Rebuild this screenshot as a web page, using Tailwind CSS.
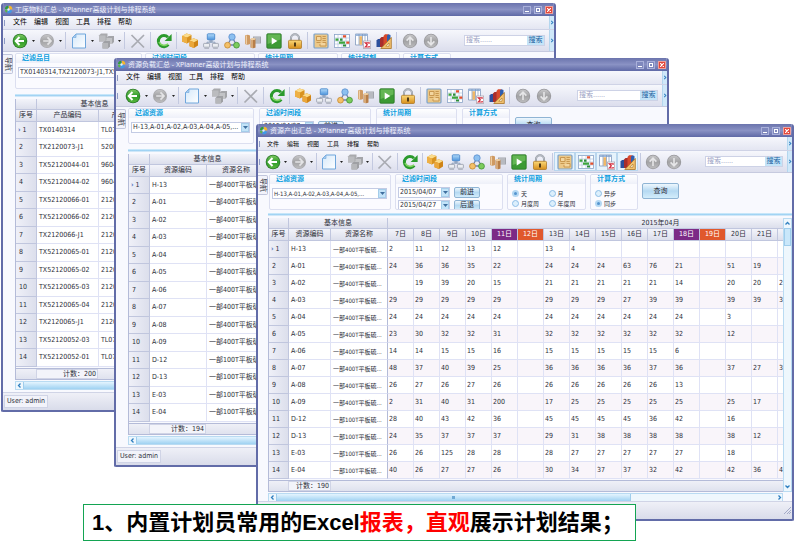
<!doctype html>
<html lang="zh-CN">

<head>
  <meta charset="utf-8">
  <meta name="viewport" content="width=device-width,initial-scale=1">
  <title>XPlanner高级计划与排程系统</title>
  <script src="https://cdn.jsdelivr.net/npm/@tailwindcss/browser@4"></script>
</head>

<body class="bg-white font-['DejaVu_Sans_Condensed','Noto_Sans_CJK_SC',sans-serif] text-[7px] leading-[9px] text-[#2c2e38]">
  <!-- icons -->
  <svg class="absolute w-0 h-0" aria-hidden="true">
    <defs>
      <linearGradient id="gGreen" x1="0" y1="0" x2="0" y2="1"><stop offset="0" stop-color="#7cc860"/><stop offset=".5" stop-color="#2f9a2a"/><stop offset="1" stop-color="#58b83a"/></linearGradient>
      <linearGradient id="gGray" x1="0" y1="0" x2="0" y2="1"><stop offset="0" stop-color="#c6c6c8"/><stop offset=".5" stop-color="#a2a2a4"/><stop offset="1" stop-color="#bcbcbe"/></linearGradient>
      <linearGradient id="gGold" x1="0" y1="0" x2="0" y2="1"><stop offset="0" stop-color="#fbd878"/><stop offset="1" stop-color="#d78f1c"/></linearGradient>
      <linearGradient id="gBlue" x1="0" y1="0" x2="0" y2="1"><stop offset="0" stop-color="#b4dcfa"/><stop offset="1" stop-color="#4c94dc"/></linearGradient>
      <linearGradient id="gPage" x1="0" y1="0" x2="1" y2="1"><stop offset="0" stop-color="#d4e8fa"/><stop offset="1" stop-color="#ffffff"/></linearGradient>
    </defs>
    <symbol id="logo" viewBox="0 0 10 10">
      <path d="M1 4.5A4 4 0 0 1 4.6.8L5 4.6z" fill="#2f9e3a"/><path d="M5.4.7A4 4 0 0 1 9.2 5L5.6 4.8z" fill="#f4b62c"/><path d="M9 6A4 4 0 0 1 3.6 9L5.2 5.6z" fill="#3d9be8"/><path d="M2.8 8.5A4 4 0 0 1 .9 5.3l3.3.1z" fill="#56b848"/><circle cx="5" cy="5" r="1.3" fill="#dff0ff"/>
    </symbol>
    <symbol id="back" viewBox="0 0 16 16">
      <circle cx="8" cy="8" r="7.3" fill="#2c7a2a"/><circle cx="8" cy="8" r="6.5" fill="url(#gGreen)"/><path d="M7.5 4L3.7 8l3.8 4M4.2 8H12" fill="none" stroke="#fff" stroke-width="2"/>
    </symbol>
    <symbol id="fwd" viewBox="0 0 16 16">
      <circle cx="8" cy="8" r="7" fill="#a8a8ac"/><circle cx="8" cy="8" r="6.3" fill="url(#gGray)"/><path d="M8.5 4.3L12 8l-3.5 3.7M11.5 8H4.2" fill="none" stroke="#e4e4e6" stroke-width="1.7"/>
    </symbol>
    <symbol id="up" viewBox="0 0 16 16">
      <circle cx="8" cy="8" r="7.2" fill="#98989c"/><circle cx="8" cy="8" r="6.4" fill="url(#gGray)"/><path d="M4.6 7.6L8 4.2l3.4 3.4M8 4.8V12" fill="none" stroke="#e6e6e8" stroke-width="1.6"/>
    </symbol>
    <symbol id="down" viewBox="0 0 16 16">
      <circle cx="8" cy="8" r="7.2" fill="#98989c"/><circle cx="8" cy="8" r="6.4" fill="url(#gGray)"/><path d="M4.6 8.4L8 11.8l3.4-3.4M8 11.2V4" fill="none" stroke="#e6e6e8" stroke-width="1.6"/>
    </symbol>
    <symbol id="doc" viewBox="0 0 16 16">
      <path d="M5 1h9.5v14H1.5V4.5z" fill="url(#gPage)" stroke="#6fa6dc"/><path d="M5 1v3.5H1.5z" fill="#a8ccee" stroke="#6fa6dc" stroke-width=".6"/>
    </symbol>
    <symbol id="cubes" viewBox="0 0 16 16">
      <path d="M1 2.500L3 .5h6.500v6L7.500 8.500H1z" fill="#a9aaad"/><path d="M1 2.500h6.500v6H1z" fill="#bbbcbf"/><path d="M8.500 5l2-2H16v6l-2 2H8.500z" fill="#a4a5a9"/><path d="M8.500 5H14v6H8.500z" fill="#c2c3c6"/><path d="M4.500 10l2-2H12v5.500l-2 2H4.500z" fill="#9fa0a4"/><path d="M4.500 10H10v5.500H4.500z" fill="#b6b7ba"/>
    </symbol>
    <symbol id="cross" viewBox="0 0 16 16">
      <path d="M1.5 2L14 14.5M14 2L1.5 14.5" stroke="#a9abb2" stroke-width="1.7" fill="none"/>
    </symbol>
    <symbol id="refresh" viewBox="0 0 16 16">
      <path d="M12.3 11.6A5.6 5.6 0 1 1 12 4.2" fill="none" stroke="#2b9a2c" stroke-width="3"/><path d="M12 10.8A5.6 5.6 0 0 1 3 9" fill="none" stroke="#7fd460" stroke-width="1.6"/><path d="M15.6 1v7H8.6z" fill="#2b9a2c"/>
    </symbol>
    <symbol id="boxes" viewBox="0 0 16 16">
      <path d="M0 3l4.5-2.4L9.5 2v6L5 10.5 0 8.5z" fill="#d8921f"/><path d="M0 3l4.5-2.4L9.5 2 5 4.6z" fill="#fbdc8c"/><path d="M0 3l5 1.6v5.9L0 8.5z" fill="#eeb044"/>
      <path d="M7.5 7.5l4-2.2L16 7v5.6L12 15l-4.5-1.8z" fill="#cf8416"/><path d="M7.5 7.5l4-2.2L16 7l-4 2.2z" fill="#fbdc8c"/><path d="M7.5 7.5L12 9.2V15l-4.5-1.8z" fill="#eba73a"/>
    </symbol>
    <symbol id="net" viewBox="0 0 16 16">
      <path d="M8 7v3M4 11V9.2h8V11" stroke="#8ea2be" fill="none"/><rect x="4.3" y=".8" width="7.4" height="6" rx=".8" fill="url(#gBlue)" stroke="#3f82c8" stroke-width=".8"/><path d="M6 8h4" stroke="#7f93b0"/>
      <rect x=".6" y="10.4" width="6" height="3.8" rx=".6" fill="#eceef2" stroke="#989eac" stroke-width=".8"/><rect x="9.4" y="10.4" width="6" height="3.8" rx=".6" fill="#eceef2" stroke="#989eac" stroke-width=".8"/><path d="M1.4 15.3h4.6M10.2 15.3h4.6" stroke="#a9aeba"/>
    </symbol>
    <symbol id="tri" viewBox="0 0 16 16">
      <path d="M8 4L3.4 12h9.2z" fill="none" stroke="#6f80a8" stroke-width="1.3"/><circle cx="8" cy="4" r="3.2" fill="#8cc0f0" stroke="#5c8fce" stroke-width=".8"/><circle cx="3.5" cy="12.2" r="2.900" fill="#f4c068" stroke="#c48a34" stroke-width=".8"/><circle cx="12.5" cy="12.2" r="2.900" fill="#7ccc5c" stroke="#44923a" stroke-width=".8"/>
    </symbol>
    <symbol id="mach" viewBox="0 0 16 16">
      <rect x="8" y="3.5" width="8" height="7" fill="#a2a5ac"/><path d="M9 5h6M9 7h6M9 9h6" stroke="#d8dade" stroke-width=".8"/><path d="M0 2.5Q2.5.8 5 2.5V11Q2.5 12.6 0 11z" fill="#cf9a62"/><path d="M1.3 2.6v8.6" stroke="#f2d4ac" stroke-width="1.2"/><path d="M5.5 6Q8 4.4 10.500 6v8.500Q8 16 5.500 14.500z" fill="#b87e48"/><path d="M7 6v9" stroke="#ecc798" stroke-width="1.2"/><ellipse cx="8" cy="6" rx="2.500" ry=".9" fill="#f0d2a6"/>
    </symbol>
    <symbol id="play" viewBox="0 0 16 16">
      <rect x=".8" y=".8" width="14.400" height="14.400" rx="1" fill="#3c9a34" stroke="#2b7326" stroke-width=".8"/><path d="M1.600 1.600h12.800v5L1.600 11z" fill="#64b654"/><path d="M5.700 4.500l5.600 3.500-5.600 3.500z" fill="#fff"/>
    </symbol>
    <symbol id="lock" viewBox="0 0 16 16">
      <path d="M4 8V5.200a4 4 0 0 1 8 0V8" fill="none" stroke="#8f959f" stroke-width="2"/><path d="M4 8V5.200a4 4 0 0 1 8 0V8" fill="none" stroke="#d0d4da" stroke-width=".7"/><rect x="1.500" y="7.300" width="13" height="8.200" rx="1" fill="url(#gGold)" stroke="#a8701a" stroke-width=".7"/><path d="M8 9.500v4" stroke="#3e2c10" stroke-width="1.800"/>
    </symbol>
    <symbol id="layout" viewBox="0 0 16 16">
      <rect x="1" y="1" width="14" height="14" rx="1" fill="#ecc888" stroke="#7ba2cc" stroke-width="1.200"/><path d="M3.500 3.500h4.500v4H3.500zM9.500 3.500h3.300M9.500 5.500h3.300M9.500 7.500h3.300M3.500 9.500h4M9.500 9.500h3.500v3.500h-6v-2" fill="#f3d6a0" stroke="#c4924a" stroke-width=".9"/>
    </symbol>
    <symbol id="gantt" viewBox="0 0 16 16">
      <rect x=".5" y="1.500" width="15" height="13" fill="#fff" stroke="#8aa4c8" stroke-width=".8"/><path d="M.5 5h15M.5 8h15M.5 11h15M4 1.500v13M8 1.500v13M12 1.500v13" stroke="#a9bcd8" stroke-width=".6"/><path d="M9 2.300h3v2.200H9zM12.300 8.500h3v2.200h-3z" fill="#e4502c"/><path d="M1.500 5.600h3v2.200h-3zM5 8.500h6v2.200H5z" fill="#3da63c"/><path d="M6 5.600h2.500v2.200H6zM9 11.600h3v2H9z" fill="#2c8c3a"/>
    </symbol>
    <symbol id="sum" viewBox="0 0 16 16">
      <path d="M.5 1h12v11H.5z" fill="#fff" stroke="#8098bc" stroke-width=".8"/><path d="M.5 1h12v2H.5z" fill="#9db8dc"/><path d="M4.300 3.200h3v8.600h-3z" fill="#f0b868"/><path d="M4 1v11M7.500 1v11M10 1v11" stroke="#8098bc" stroke-width=".7"/><rect x="8.500" y="8" width="7.200" height="7.600" fill="#fff" stroke="#a49ca8" stroke-width=".7"/><path d="M14.200 10.800V9.800H10.300l2 2-2 2.200h3.900v-1" fill="none" stroke="#d42c3c" stroke-width="1.200"/>
    </symbol>
    <symbol id="chart" viewBox="0 0 16 16">
      <path d="M.5 7.500L2 6h3v8H.5z" fill="#2c4f9c"/><path d="M4 5.500L5.500 4H8v10H4z" fill="#a82e2c"/><path d="M7.500 3L9 1.200h3.500V12h-5z" fill="#d84a2c"/><path d="M11 2.500l1.500-1.300 2 .8v10H11z" fill="#2f5fb0"/><path d="M15.300 4.500V15.500H4.800z" fill="#f2c270" stroke="#a87224" stroke-width=".8"/><path d="M13 10v3.300H9.800z" fill="#fdf4e0" stroke="#a87224" stroke-width=".6"/>
    </symbol>
  </svg>

  <main id="desktop" class="relative min-h-[545px] overflow-hidden">
    <p class="absolute z-40 left-[83px] top-[504px] w-[553px] h-[37px] flex items-center border border-[#13a452] bg-white pl-2 whitespace-nowrap text-[22px] leading-[34px] font-bold text-black font-['Liberation_Sans','Noto_Sans_CJK_SC',sans-serif]">1、内置计划员常用的Excel<span class="text-[#ff0000]">报表，直观</span>展示计划结果；</p>
  </main>

  <script>
    const desktop = document.getElementById("desktop");

    const icon = (name, cls) => `<svg class="${cls || "w-4 h-4"}" aria-hidden="true"><use href="#${name}"/></svg>`;
    const arrow = `<svg class="w-[5px] h-[3px]" viewBox="0 0 5 3" aria-hidden="true"><path d="M0 0h5L2.500 3z" fill="#3f6f9f"/></svg>`;

    const menus = ["文件", "编辑", "视图", "工具", "排程", "帮助"];
    // "|" is a separator, "v" a drop-down arrow
    const tools = [["back", "后退"], "v", ["fwd", "前进"], "v", "|", ["doc", "新建"], "v", ["cubes", "复制"], "v", "|", ["cross", "删除"], "|", ["refresh", "刷新"], "|",
      ["boxes", "物料"], ["net", "网络"], ["tri", "工艺"], ["mach", "资源"], ["play", "运行"], ["lock", "锁定"], "|",
      ["layout", "布局"], ["gantt", "甘特图"], ["sum", "汇总"], ["chart", "图表"], "|", ["up", "上移"], ["down", "下移"]];
    const pressed = ["layout", "gantt", "sum", "chart"];

    function toolbar(win) {
      return tools.map(t => {
        if (t == "|") return `<span class="${win.front ? "w-1" : "w-[5px]"} flex justify-center"><i class="w-px h-[17px] bg-[#c3c9e0]"></i></span>`;
        if (t == "v") return `<span class="${win.front ? "w-[5px]" : "w-[6px]"} flex justify-center"><svg class="w-[3px] h-[2px]" viewBox="0 0 3 2"><path d="M0 0h3L1.500 2z" fill="#222"/></svg></span>`;
        const on = win.front && pressed.includes(t[0]);
        return `<button type="button" aria-label="${t[1]}" class="w-[21px] h-[19px] shrink-0 flex items-center justify-center border ${on ? "border-[#b9d6ee] bg-[#e6f3fc]" : "border-transparent"}">${icon(t[0])}</button>`;
      }).join("");
    }

    function combo(text, cls, label) {
      return `<div class="relative ${cls}"><select aria-label="${label}" class="appearance-none block w-full h-[11px] border border-[#c3cbe4] bg-white pl-px pr-[8px] leading-[9px] whitespace-nowrap overflow-hidden"><option>${text}</option></select>
        <span class="absolute right-px top-px w-[8px] h-[9px] flex items-center justify-center bg-[#c3e3f8] border border-[#a5cdea] pointer-events-none">${arrow}</span></div>`;
    }

    const blueButton = "border border-[#8fb4d4] rounded-[2px] bg-linear-to-b from-[#eef7fd] via-[#b5d9f2] to-[#d3edfb] flex items-center justify-center";

    function dates() {
      return `<div class="px-[2px] pt-[3px] flex flex-col gap-[2px]">` + [["2015/04/07", "前进", "开始日期"], ["2015/04/27", "后退", "结束日期"]].map(d =>
        `<div class="flex gap-1">${combo(d[0], "w-[52px]", d[2])}<button type="button" class="w-[26px] h-[11px] ${blueButton}">${d[1]}</button></div>`).join("") + `</div>`;
    }

    function radios(name, items, cls) {
      return `<div class="grid ${cls} pl-1 pt-[5px] gap-y-px">` + items.map(t =>
        `<label class="flex items-center gap-[2px] h-[9px] text-[6px] whitespace-nowrap"><input type="radio" name="${name}" ${t[1] ? "checked" : ""} class="appearance-none w-[7px] h-[7px] rounded-full border border-[#8dbde6] bg-[#dceffc] checked:bg-[#5595cf] checked:border-2 checked:border-[#b4d8f3]">${t[0]}</label>`).join("") + `</div>`;
    }

    function panel(title, width, body) {
      return `<fieldset class="${width} h-[36px] shrink-0 overflow-hidden border border-[#dcdff0] rounded-[2px] bg-[#fbfbff]">
        <div class="h-[9px] pl-[6px] bg-linear-to-b from-white to-[#eef0f9] font-bold text-[#0d9fe0] leading-[9px] whitespace-nowrap">${title}</div>${body}</fieldset>`;
    }

    function grid(win) {
      const head = "border-r border-b border-[#c0c6de] bg-linear-to-b from-[#f3f4fa] to-[#dcdfec] font-normal text-center p-0 whitespace-nowrap overflow-hidden";
      const cell = "border-r border-b border-[#dfe2f5] p-0 bg-white whitespace-nowrap overflow-hidden";
      const days = win.days || [];
      let html = `<table class="table-fixed border-separate border-spacing-0 ${win.tableWidth}"><colgroup>${win.cols.map(c => `<col class="${c}">`).join("")}${days.map((d, i) => `<col class="${i < 15 ? "w-[26px]" : "w-[156px]"}">`).join("")}</colgroup>`;
      html += `<thead><tr class="h-[11px]"><th class="${head}"></th><th colspan="2" class="${head}">基本信息</th>${days.length ? `<th colspan="16" class="${head}">2015年04月</th>` : ""}</tr>`;
      html += `<tr class="h-[12px]"><th class="${head}">序号</th>${win.heads.map(h => `<th class="${head}">${h}</th>`).join("")}`;
      html += days.map(d => {
        if (d == 11 || d == 18) return `<th class="border-r border-b border-[#c0c6de] bg-[#7c2a86] text-white font-normal p-0">${d}日</th>`;
        if (d == 12 || d == 19) return `<th class="border-r border-b border-[#c0c6de] bg-[#e0582c] text-white font-normal p-0">${d}日</th>`;
        return `<th class="${head}">${d == 22 ? "" : d + "日"}</th>`;
      }).join("") + `</tr></thead><tbody>`;
      win.rows.forEach((row, i) => {
        const h = win.front ? "h-[17px]" : "h-[17px] even:h-[18px]";
        html += `<tr class="group ${h}"><th class="border-r border-b border-[#c0c6de] bg-linear-to-r from-[#eff0f8] to-[#dcdfec] font-normal text-left p-0 ${i ? "pl-[3px]" : "pl-[2px]"}">${i ? "" : `<span class="font-bold text-[#4a6cb8]">›</span> `}${i + 1}</th>`;
        html += `<td class="${cell} pl-[2px]">${row[0]}</td><td class="${cell} pl-[2px] ${win.front ? "text-[6px] border-r-[#b4bbd8]" : ""}">${row[1]}</td>`;
        if (days.length) {
          const vals = row[2].split(",");
          html += days.map((d, j) => `<td class="${cell} pl-px group-even:bg-[#f9f5fa]">${vals[j] || ""}</td>`).join("");
        }
        html += `</tr>`;
      });
      return html + `</tbody></table>`;
    }

    const chev = d => `<svg class="w-[5px] h-[5px]" viewBox="0 0 5 5"><path d="${d}" fill="none" stroke="#2f7fc0" stroke-width="1.300"/></svg>`;

    function render(win) {
      const side = `<span class="ml-1 w-[5px] self-stretch flex items-center justify-center bg-[#cfe8f9] border-l border-[#b4d6ee]">${chev("M1.500 .5l2 2-2 2")}</span>`;
      const grip = `<i class="w-[2px] h-[6px] ml-px border-l border-[#8d9ac4] shrink-0"></i>`;
      const sec = document.createElement("section");
      sec.className = win.frame + " absolute flex flex-col overflow-hidden rounded-t-[3px] rounded-b-[2px] border-2 border-t-0 border-[#626ca8] bg-[#f8f9fe]";
      sec.innerHTML = `
        <header class="h-[13px] shrink-0 flex items-center gap-[2px] px-px bg-linear-to-b from-[#6b74ad] via-[#8a92c4] to-[#5f69a6] text-[#eef0fc]">
          ${icon("logo", "w-[9px] h-[9px]")}
          <h2 class="flex-1 leading-[13px] whitespace-nowrap font-['Noto_Sans','Noto_Sans_CJK_SC',sans-serif]">${win.title}</h2>
          <button type="button" aria-label="最小化" class="w-2 h-2 border border-[#a9b0da] bg-[#7f88bd] flex items-end justify-center"><i class="w-[4px] h-px mb-px bg-white"></i></button>
          <button type="button" aria-label="最大化" class="w-2 h-2 ml-px border border-[#a9b0da] bg-[#7f88bd] flex items-center justify-center"><i class="w-[4px] h-[4px] border border-white"></i></button>
          <button type="button" aria-label="关闭" class="w-2 h-2 ml-px border border-[#f0a09a] bg-[#e2483c] flex items-center justify-center"><svg class="w-[4px] h-[4px]" viewBox="0 0 4 4"><path d="M0 0l4 4M4 0L0 4" stroke="#fff" stroke-width="1.200"/></svg></button>
        </header>
        <nav class="h-[14px] shrink-0 flex items-center bg-linear-to-b from-[#f6f7fc] to-[#e4e6f2] border-b border-[#cfd3e6]">
          ${grip}<div class="flex-1 flex ${win.front ? "gap-2 text-[6px] pl-[6px]" : "gap-[7px] pl-[7px]"}">${menus.map(m => `<a href="#" class="whitespace-nowrap text-black">${m}</a>`).join("")}</div>${side}
        </nav>
        <div class="h-[22px] shrink-0 flex items-center bg-linear-to-b from-[#f6f7fc] to-[#dcdeed] border-b border-[#c6cadf]">
          ${grip}<div class="flex items-center ${win.front ? "pl-px" : "pl-[3px]"}">${toolbar(win)}</div>
          <form class="ml-auto ${win.front ? "w-[78px]" : "w-[81px]"} h-[11px] flex border border-[#cdd2e6] bg-white">
            <input type="text" aria-label="搜索" placeholder="搜索......" class="flex-1 min-w-0 pl-px text-[7px] leading-[9px] placeholder:text-[#9ba2c4]">
            <button type="button" class="w-[17px] bg-[#c4e4f8] text-[#1c5fa0] leading-[9px]">搜索</button>
          </form>${side}
        </div>
        <div class="flex-1 flex min-h-0">
          <aside class="${win.front ? "w-[10px]" : "w-[12px]"} shrink-0">
            <button type="button" class="mt-[2px] w-[10px] h-[20px] flex items-center justify-center border border-l-0 border-[#c0c5dc] rounded-r-[2px] bg-[#f2f3fa] [writing-mode:vertical-rl] [text-orientation:sideways] leading-[8px]">导航</button>
          </aside>
          <div class="flex-1 min-w-0 flex flex-col">
            <div class="pt-px flex ${win.gap}">${win.panels.join("")}</div>
            <div class="h-[3px] shrink-0 bg-linear-to-b from-[#d8effc] to-[#8fcaf0] border-b border-[#cfe7f8]"></div>
            <div class="mt-[2px] ${win.gridHeight} shrink-0 flex">
              <div class="flex-1 min-w-0 flex flex-col border-l border-[#b4bbd8]">
                <div class="flex-1 min-h-0 overflow-hidden">${grid(win)}</div>
                <div class="h-[12px] shrink-0 flex items-center border-y border-[#b4bbd8] bg-linear-to-b from-[#eff0f7] to-[#dfe2ee]">
                  <output class="${win.count[1]} h-[10px] border border-[#d0d4e6] bg-[#f3f4fa] text-right pr-px leading-[9px] whitespace-nowrap">计数：${win.count[0]}</output>
                </div>
              </div>
              <div class="w-[9px] shrink-0 flex flex-col items-center border border-[#b9dbf2] bg-[#eef7fd] py-[2px]">
                ${chev("M.5 3.500l2-2 2 2")}<i class="mt-[2px] w-full h-[18px] border border-[#9fcdec] bg-[#c9e7fa]"></i><span class="mt-auto">${chev("M.5 1.500l2 2 2-2")}</span>
              </div>
            </div>
            <div class="h-[9px] mt-px mr-[9px] shrink-0 flex items-center border border-[#b9dbf2] bg-[#eef7fd]">
              <span class="w-[7px] flex justify-center">${chev("M3.500 .5l-2 2 2 2")}</span>
              <i class="w-[355px] h-full flex items-center justify-center bg-linear-to-b from-[#e4f4fe] to-[#9fd2f2] border-x border-[#9fcdec]"><i class="w-[3px] h-[3px] bg-[#6fa9d4]"></i></i>
              <span class="ml-auto">${chev("M1.500 .5l2 2-2 2")}</span>
            </div>
          </div>
        </div>
        <footer class="h-[18px] shrink-0 flex items-center border-t border-[#d0d4e6] bg-linear-to-b from-[#eff0f7] to-[#d9dcea]">
          <span class="ml-px w-[44px] h-[13px] border border-[#d0d4e6] bg-[#f2f3fa] pl-[2px] leading-[11px] whitespace-nowrap">${win.front ? "" : "User: admin"}</span>
          <svg class="ml-auto mr-px w-[7px] h-[7px]" viewBox="0 0 7 7"><path d="M0 7L7 0M3 7l4-4M5 7l2-2" stroke="#a4abc8"/></svg>
        </footer>`;
      desktop.appendChild(sec);
    }

    const codes = ["H-13", "A-01", "A-02", "A-03", "A-04", "A-05", "A-06", "A-07", "A-08", "A-09", "D-12", "D-13", "E-03", "E-04"];
    const names = codes.map((c, i) => `一部${i < 10 ? 400 : 100}T平板硫...`);
    const output = [
      "2,11,12,13,12,,13,4",
      "24,36,36,35,22,,24,24,24,63,76,21,,51,19",
      ",19,39,20,15,,21,21,21,21,21,14,,20,20,2",
      "29,29,29,29,29,,29,29,29,27,39,39,,39,39,3",
      "24,24,24,24,24,,24,24,24,24,24,24,,3",
      "23,30,32,32,31,,32,32,32,32,32,32,,12",
      "14,14,15,15,16,,15,15,15,15,15,6",
      "48,37,40,39,25,,36,36,36,36,37,36,,37,27,3",
      "26,27,26,27,26,,26,26,26,26,26,13",
      "2,31,40,31,200,,17,25,25,25,25,25,,25,17",
      "28,40,43,42,36,,45,45,45,45,36,42,,16",
      "24,35,37,37,37,,29,31,38,38,38,38,,38,12",
      "26,26,125,28,28,,28,27,27,27,27,27,,18",
      "40,26,27,27,26,,30,34,37,37,32,42,,42,36,4"
    ];
    const resources = "H-13,A-01,A-02,A-03,A-04,A-05,...";
    const query = `<button type="button" class="mt-[9px] w-[37px] h-[16px] ${blueButton}">查询</button>`;

    render({
      title: "工序物料汇总 - XPlanner高级计划与排程系统",
      frame: "z-10 left-px top-[3px] w-[555px] h-[409px]",
      gap: "gap-[3px] pb-[5px]", gridHeight: "h-[281px]", tableWidth: "w-[137px]",
      panels: [
        panel("过滤品目", "w-[127px]", `<div class="pl-[2px] pt-1">${combo("TX0140314,TX2120073-J1,TX52120044-01", "w-[118px]", "过滤品目")}</div>`),
        panel("过滤时间段", "w-[110px]", ""), panel("统计周期", "w-[80px]", ""), panel("统计时刻", "w-[59px]", ""), panel("计算方式", "w-[48px]", "")
      ],
      cols: ["w-[21px]", "w-[62px]", "w-[54px]"], heads: ["产品编码", "产品名称"], count: [200, "ml-[20px] w-[62px]"],
      rows: [["TX0140314", "TL07"], ["TX2120073-J1", "520F"], ["TX52120044-01", "9604"], ["TX52120044-02", "9604"], ["TX52120066-01", "2120"], ["TX52120066-02", "2120"], ["TX2120066-J1", "2120"],
        ["TX52120065-01", "2120"], ["TX52120065-02", "2120"], ["TX52120065-03", "2120"], ["TX52120065-04", "2120"], ["TX2120065-J1", "2120"], ["TX52120052-03", "TL07"], ["TX52120052-01", "TL07"]]
    });

    render({
      title: "资源负载汇总 - XPlanner高级计划与排程系统",
      frame: "z-20 left-[114px] top-[58px] w-[555px] h-[409px]",
      gap: "gap-[5px] pb-[5px]", gridHeight: "h-[281px]", tableWidth: "w-[137px]",
      panels: [
        panel("过滤资源", "w-[126px]", `<div class="pl-[2px] pt-1">${combo(resources, "w-[119px]", "过滤资源")}</div>`),
        panel("过滤时间段", "w-[112px]", dates()), panel("统计周期", "w-[81px]", ""), panel("计算方式", "w-[48px]", ""), query
      ],
      cols: ["w-[21px]", "w-[57px]", "w-[59px]"], heads: ["资源编码", "资源名称"], count: [194, "ml-[20px] w-[57px]"],
      rows: codes.map((c, i) => [c, names[i]])
    });

    render({
      front: true, title: "资源产出汇总 - XPlanner高级计划与排程系统",
      frame: "z-30 left-[256px] top-[124px] w-[538px] h-[397px]",
      gap: "gap-1 pb-[3px] pl-px", gridHeight: "h-[274px]", tableWidth: "w-[665px]",
      panels: [
        panel("过滤资源", "w-[122px]", `<div class="pl-[2px] pt-1 text-[6px]">${combo(resources, "w-[115px]", "过滤资源")}</div>`),
        panel("过滤时间段", "w-[108px]", dates()),
        panel("统计周期", "w-[79px]", radios("period", [["天", 1], ["月", 0], ["月度周", 0], ["年度周", 0]], "grid-cols-2")),
        panel("计算方式", "w-[48px]", radios("mode", [["异步", 0], ["同步", 1]], "grid-cols-1")), query
      ],
      cols: ["w-[20px]", "w-[42px]", "w-[57px]"], heads: ["资源编码", "资源名称"], count: [190, "ml-[19px] w-[43px]"],
      days: [7, 8, 9, 10, 11, 12, 13, 14, 15, 16, 17, 18, 19, 20, 21, 22],
      rows: codes.map((c, i) => [c, names[i], output[i]])
    });
  </script>
</body>
</html>
